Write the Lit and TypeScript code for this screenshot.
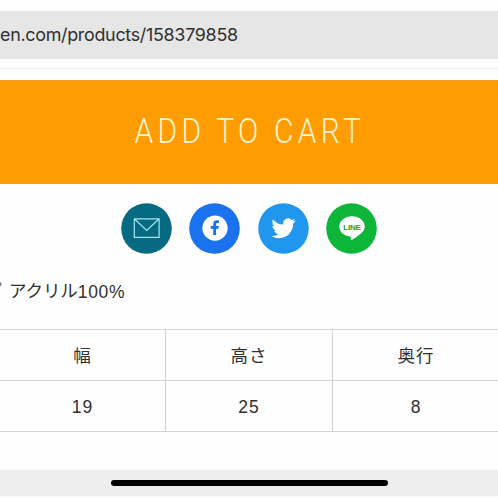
import { LitElement, html, css, svg } from "lit";
import { customElement } from "lit/decorators.js";

const columns = [
  { label: "幅", value: "19" },
  { label: "高さ", value: "25" },
  { label: "奥行", value: "8" },
];

const shares = [
  {
    name: "mail",
    art: svg`<circle cx="25.5" cy="25.5" r="25.3" fill="#056a82"/>
      <path d="M13.3 15.8h24.8v18.6H13.3zM13.3 15.8l12.4 11.6 12.4-11.6" fill="none" stroke="#a5e6f2" stroke-width="1.2"/>`,
  },
  {
    name: "facebook",
    art: svg`<circle cx="25.5" cy="25.5" r="25.3" fill="#1b72ee"/>
      <circle cx="26" cy="25.2" r="12.6" fill="#fff"/>
      <path d="M24.2 32v-6.2h-2.5v-2.9h2.5v-1.8c0-2.7 1.5-3.9 3.7-3.9.9 0 1.6.1 2 .2v2.6h-1.3c-1.2 0-1.5.6-1.5 1.4v1.5h2.8l-.4 2.9h-2.4V32z" fill="#1b72ee"/>`,
  },
  {
    name: "twitter",
    art: svg`<circle cx="25.5" cy="25.5" r="25.3" fill="#2196ee"/>
      <path transform="translate(13.4 13.2) scale(1.01)" d="M23.953 4.57a10 10 0 0 1-2.825.775 4.958 4.958 0 0 0 2.163-2.723c-.951.555-2.005.959-3.127 1.184a4.92 4.92 0 0 0-8.384 4.482C7.69 8.095 4.067 6.13 1.64 3.162a4.822 4.822 0 0 0-.666 2.475c0 1.71.87 3.213 2.188 4.096a4.904 4.904 0 0 1-2.228-.616v.06a4.923 4.923 0 0 0 3.946 4.827 4.996 4.996 0 0 1-2.212.085 4.936 4.936 0 0 0 4.604 3.417 9.867 9.867 0 0 1-6.102 2.105c-.39 0-.779-.023-1.17-.067a13.995 13.995 0 0 0 7.557 2.209c9.053 0 13.998-7.496 13.998-13.985 0-.21 0-.42-.015-.63A9.935 9.935 0 0 0 24 4.59z" fill="#fff"/>`,
  },
  {
    name: "line",
    art: svg`<circle cx="25.5" cy="25.5" r="25.3" fill="#0db639"/>
      <path d="M26 13.2c-7 0-12.7 4.5-12.7 10.2 0 5.1 4.5 9.3 10.6 10 .9.2 1.1.6 1 1.5l-.2 1.5c0 .6.4.8 1 .5 3.7-2 8.1-4.8 10.5-7.6 1.7-1.9 2.5-3.8 2.5-5.9C38.7 17.7 33 13.2 26 13.2z" fill="#fff"/>
      <text class="line-word" x="17.3" y="26.6" textLength="17.6">LINE</text>`,
  },
];

@customElement("app-root")
export class AppRoot extends LitElement {
  static styles = css`
    :host {
      display: flex;
      flex-direction: column;
      width: 498px;
      height: 498px;
      overflow: hidden;
      background: #fefefe;
      color: #303030;
      font-family: "Liberation Sans", "Noto Sans CJK JP", sans-serif;
    }
    * { box-sizing: border-box; }
    .browser {
      flex: none;
      height: 69px;
      padding-top: 11px;
      border-bottom: 1px solid #ececec;
    }
    .address {
      height: 48px;
      background: #e6e6e6;
      font: 17.9px/48px Inter, sans-serif;
      letter-spacing: -0.29px;
      white-space: nowrap;
    }
    .cart {
      flex: none;
      display: flex;
      justify-content: center;
      align-items: center;
      width: 100%;
      height: 104px;
      margin-top: 11px;
      padding: 0 0 3px;
      border: 0;
      border-top: 1px solid #eda027;
      background: #ff9c00;
      color: #fff3cf;
      font: 300 35px/1 Roboto, sans-serif;
      white-space: nowrap;
    }
    .cart-label {
      letter-spacing: 5px;
      margin-right: -2px;
      transform: scaleX(0.855);
    }
    .shares {
      display: flex;
      justify-content: center;
      gap: 17.3px;
      margin-top: 19px;
      height: 51px;
    }
    .share { width: 51px; height: 51px; flex: none; }
    .line-word {
      font: 700 8px "Liberation Sans", sans-serif;
      fill: #0da338;
    }
    .material {
      display: flex;
      height: 28px;
      margin-top: 23px;
      font-size: 17.5px;
      line-height: 28px;
      white-space: nowrap;
    }
    .tail {
      width: 9px;
      display: flex;
      justify-content: flex-end;
      padding-right: 7.5px;
    }
    .kana { letter-spacing: -0.1px; }
    .percent { letter-spacing: 0.7px; padding-top: 1px; }
    .sizes {
      display: grid;
      grid-template-columns: 166px 167px 167px;
      grid-template-rows: 51px 51px;
      width: 500px;
      margin-top: 24px;
      border-top: 1px solid #d4d4d4;
    }
    .cell {
      display: flex;
      align-items: center;
      justify-content: center;
      border-right: 1px solid #d0d0d0;
      border-bottom: 1px solid #d4d4d4;
      font-size: 17.5px;
      letter-spacing: 1px;
    }
    .head { padding-bottom: 2px; }
    .value { padding-top: 2px; }
    .footer {
      height: 28px;
      flex: none;
      margin-top: auto;
      padding-top: 10px;
      background: #eeeeee;
      border-bottom: 2px solid #f9f9f9;
    }
    .home {
      width: 277px;
      height: 6px;
      margin-left: 111px;
      border-radius: 3px;
      background: #000;
    }
  `;

  render() {
    return html`
      <div class="browser"><div class="address">en.com/products/158379858</div></div>
      <button class="cart"><span class="cart-label">ADD TO CART</span></button>
      <div class="shares">
        ${shares.map((s) => html`<svg class="share" viewBox="0 0 51 51" aria-label=${s.name}>${s.art}</svg>`)}
      </div>
      <div class="material">
        <span class="tail">プ</span><span class="kana">アクリル</span><span class="percent">100%</span>
      </div>
      <div class="sizes">
        ${columns.map((c) => html`<div class="cell head">${c.label}</div>`)}
        ${columns.map((c) => html`<div class="cell value">${c.value}</div>`)}
      </div>
      <div class="footer"><div class="home"></div></div>
    `;
  }
}
